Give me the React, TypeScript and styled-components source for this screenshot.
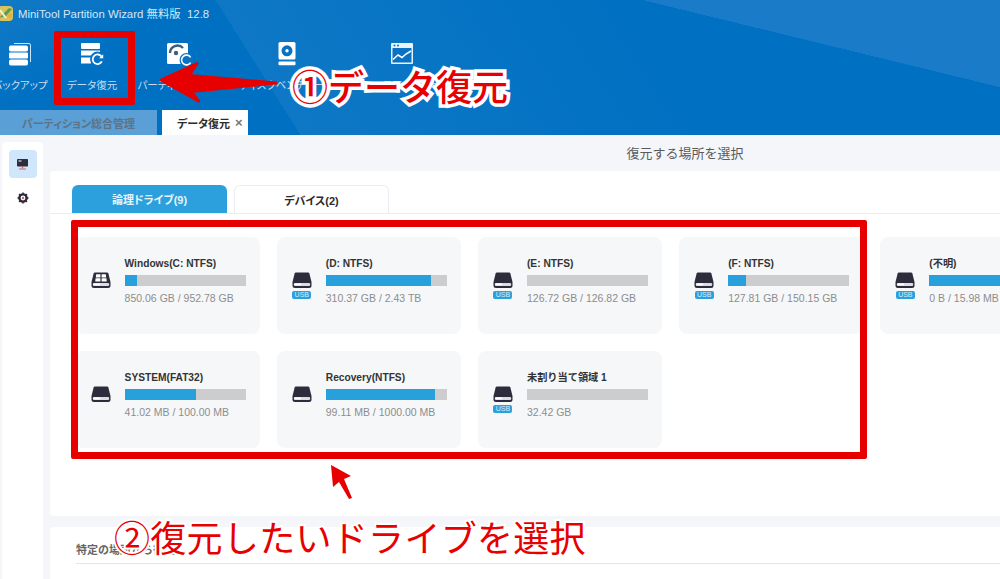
import React from "react";
import styled, { createGlobalStyle } from "styled-components";

const FONT = `"Liberation Sans", "Noto Sans CJK JP", sans-serif`;
const RED = "#e60000";

const GlobalStyle = createGlobalStyle`
  html, body {
    margin: 0;
    padding: 0;
    background: #f4f6fa;
  }
  body {
    font-family: ${FONT};
  }
`;

type Drive = {
  name: string;
  usage: string;
  percent: number;
  usb?: boolean;
  windows?: boolean;
};

const DRIVES: Drive[] = [
  { name: "Windows(C: NTFS)", usage: "850.06 GB / 952.78 GB", percent: 10, windows: true },
  { name: "(D: NTFS)", usage: "310.37 GB / 2.43 TB", percent: 87, usb: true },
  { name: "(E: NTFS)", usage: "126.72 GB / 126.82 GB", percent: 0, usb: true },
  { name: "(F: NTFS)", usage: "127.81 GB / 150.15 GB", percent: 15, usb: true },
  { name: "(不明)", usage: "0 B / 15.98 MB", percent: 100, usb: true },
  { name: "SYSTEM(FAT32)", usage: "41.02 MB / 100.00 MB", percent: 58.7 },
  { name: "Recovery(NTFS)", usage: "99.11 MB / 1000.00 MB", percent: 90 },
  { name: "未割り当て領域 1", usage: "32.42 GB", percent: 0, usb: true },
];

const BackupIcon = () => (
  <svg width="26" height="26" viewBox="0 0 26 26" fill="#fff">
    <path d="M7 2.5h15a1.5 1.5 0 0 1 1.5 1.5v17" fill="none" stroke="#fff" strokeWidth="1" opacity="0.8" />
    <rect x="2" y="4.5" width="19" height="6" rx="1.8" />
    <rect x="2" y="11.5" width="19" height="6" rx="0.8" />
    <rect x="2" y="18.5" width="19" height="6" rx="1.8" />
  </svg>
);

const RecoveryIcon = () => (
  <svg width="26" height="26" viewBox="0 0 26 26" fill="#fff">
    <rect x="2" y="2" width="19" height="6" rx="1" />
    <rect x="2" y="9.5" width="19" height="5" />
    <rect x="2" y="16.5" width="10" height="6" />
    <circle cx="18.5" cy="18" r="7.5" fill="#0a72c2" />
    <path d="M22.5 15.6a4.8 4.8 0 1 0 .3 4.8" fill="none" stroke="#fff" strokeWidth="1.8" />
    <path d="M24.2 13.2v4h-4z" />
  </svg>
);

const PartitionIcon = () => (
  <svg width="28" height="26" viewBox="0 0 28 26">
    <rect x="1" y="2" width="21" height="21" rx="1.5" fill="#fff" />
    <path d="M4 12a7.5 7.5 0 0 1 13-5" fill="none" stroke="#3c5f80" strokeWidth="2.4" />
    <circle cx="10" cy="12" r="2.2" fill="#3c5f80" />
    <circle cx="20.5" cy="19" r="7" fill="#0a72c2" />
    <path d="M24.6 16.4a4.9 4.9 0 1 0 0 5.2" fill="none" stroke="#fff" strokeWidth="1.6" />
  </svg>
);

const DiskIcon = () => (
  <svg width="20" height="26" viewBox="0 0 20 26">
    <rect x="1.5" y="1" width="17" height="17.5" rx="1.5" fill="#fff" />
    <circle cx="10" cy="9.8" r="5.5" fill="#0a72c2" />
    <circle cx="10" cy="9.8" r="1.7" fill="#fff" />
    <rect x="1.5" y="20.5" width="17" height="3.8" rx="1" fill="#fff" />
  </svg>
);

const ChartIcon = () => (
  <svg width="26" height="26" viewBox="0 0 26 26">
    <rect x="2" y="2" width="22" height="21" rx="1" fill="#e8f2fa" />
    <rect x="3.5" y="7" width="19" height="14.5" fill="#0a72c2" />
    <circle cx="5.5" cy="4.5" r="1" fill="#0a72c2" />
    <circle cx="9" cy="4.5" r="1" fill="#0a72c2" />
    <path d="M4 18.5l5-4.5 4 2.5 4-3.5 5-3" fill="none" stroke="#fff" strokeWidth="1.5" />
  </svg>
);

const MonitorIcon = () => (
  <svg width="13" height="13" viewBox="0 0 13 13">
    <rect x="1" y="1" width="11" height="7.5" rx="0.8" fill="#2b2d3c" />
    <rect x="2.5" y="2.5" width="3" height="1" fill="#fff" />
    <rect x="5.8" y="8.5" width="1.4" height="2" fill="#e0605a" />
    <rect x="3" y="10.5" width="7" height="1" fill="#e0605a" />
  </svg>
);

const GearIcon = () => (
  <svg width="12" height="12" viewBox="0 0 12 12">
    <circle cx="6" cy="6" r="3.6" fill="none" stroke="#2b2d3c" strokeWidth="2.4" />
    <path
      d="M6 .5v2M6 9.5v2M.5 6h2M9.5 6h2M2.1 2.1l1.4 1.4M8.5 8.5l1.4 1.4M2.1 9.9l1.4-1.4M8.5 3.5l1.4-1.4"
      stroke="#2b2d3c"
      strokeWidth="1.5"
    />
    <circle cx="6" cy="6" r="1.2" fill="#e0605a" />
  </svg>
);

const DriveIcon = ({ windows }: { windows?: boolean }) => (
  <svg width="20" height="16" viewBox="0 0 20 16">
    <path
      d="M4 .5h12a1.5 1.5 0 0 1 1.4 1L19.5 10v3.5a2.5 2.5 0 0 1-2.5 2.5H3a2.5 2.5 0 0 1-2.5-2.5V10L2.6 1.5A1.5 1.5 0 0 1 4 .5z"
      fill="#2b2d3c"
    />
    <rect x="1.8" y="11" width="16.4" height="3" rx="1.2" fill="#dcdce2" />
    <rect x="2.2" y="11.6" width="7" height="1.6" rx="0.8" fill="#fff" />
    {windows && (
      <path d="M5.2 2.2h4.2v3.2H4.8zM10.6 2.2h4.2l.4 3.2h-4.6zM4.6 6.3h4.8v3.2H4.2zM10.6 6.3h4.8l.4 3.2h-5.2z" fill="#fff" />
    )}
  </svg>
);

const LogoIcon = () => (
  <svg width="16" height="18" viewBox="0 0 16 18">
    <rect x="0" y="2" width="15" height="15" rx="4" fill="#d8c35c" />
    <path d="M1 14L11 4l3 1-6 7z" fill="#5f9a52" />
    <path d="M2 6l6 8" stroke="#f4efcf" strokeWidth="2" />
    <circle cx="12" cy="12" r="2.4" fill="#e2b23e" />
  </svg>
);

const TOOLS = [
  { label: "バックアップ", width: 60, icon: <BackupIcon /> },
  { label: "データ復元", width: 84, icon: <RecoveryIcon /> },
  { label: "パーティション復元", width: 92, icon: <PartitionIcon /> },
  { label: "ディスクベンチマーク", width: 122, icon: <DiskIcon /> },
  { label: "スペースアナライザー", width: 108, icon: <ChartIcon /> },
];

export default function App() {
  return (
    <Page>
      <GlobalStyle />
      <Header>
        <TitleBar>
          <LogoIcon />
          <TitleText>MiniTool Partition Wizard 無料版&nbsp; 12.8</TitleText>
        </TitleBar>
        <Toolbar>
          {TOOLS.map((tool) => (
            <ToolButton key={tool.label} $width={tool.width}>
              <ToolIcon>{tool.icon}</ToolIcon>
              <ToolLabel>{tool.label}</ToolLabel>
            </ToolButton>
          ))}
        </Toolbar>
        <TabStrip>
          <WindowTab>パーティション総合管理</WindowTab>
          <WindowTab $active>
            データ復元 <CloseMark>×</CloseMark>
          </WindowTab>
        </TabStrip>
      </Header>

      <Body>
        <Sidebar>
          <SideButton $active>
            <MonitorIcon />
          </SideButton>
          <SideButton>
            <GearIcon />
          </SideButton>
        </Sidebar>
        <Main>
          <Heading>復元する場所を選択</Heading>
          <DrivePanel>
            <DriveTabs>
              <DriveTab $active>論理ドライブ(9)</DriveTab>
              <DriveTab>デバイス(2)</DriveTab>
            </DriveTabs>
            <DriveGrid>
              {DRIVES.map((drive) => (
                <DriveCard key={drive.name}>
                  <DriveIconBox>
                    <DriveIcon windows={drive.windows} />
                    {drive.usb && <UsbBadge>USB</UsbBadge>}
                  </DriveIconBox>
                  <DriveInfo>
                    <DriveName>{drive.name}</DriveName>
                    <UsageBar>
                      <UsageFill style={{ width: `${drive.percent}%` }} />
                    </UsageBar>
                    <UsageText>{drive.usage}</UsageText>
                  </DriveInfo>
                </DriveCard>
              ))}
            </DriveGrid>
          </DrivePanel>
          <LocationPanel>
            <LocationTitle>特定の場所から復元</LocationTitle>
          </LocationPanel>
        </Main>
      </Body>

      <ToolHighlight />
      <DriveHighlight />
      <Arrows width="1000" height="579" viewBox="0 0 1000 579">
        <path
          d="M161 80 L197 63.5 L189 75.5 L276 83 L191 91.5 L198.500 101 Z"
          fill={RED}
          stroke={RED}
          strokeWidth="3"
          strokeLinejoin="round"
        />
        <path d="M331 465 L351 476 L344 479 L352 498 L349 499 L339 482 L333 487 Z" fill={RED} />
      </Arrows>
      <StepOne>①データ復元</StepOne>
      <StepTwo>②復元したいドライブを選択</StepTwo>
    </Page>
  );
}

const Page = styled.div`
  position: relative;
  width: 1000px;
  height: 579px;
  overflow: hidden;
  background: #f4f6fa;
`;

/* two glassy sweeps over the title area: the hard-edged wedge at the right and the fading band */
const Header = styled.header`
  height: 135px;
  display: flex;
  flex-direction: column;
  background:
    linear-gradient(13.7deg, transparent 77%, #1a7bc9 77%),
    linear-gradient(57.8deg, transparent 27.7%, rgba(255, 255, 255, 0.055) 27.7%, transparent 66%),
    linear-gradient(150deg, rgba(255, 255, 255, 0.07) 0, transparent 16%),
    #0070c2;
`;

const TitleBar = styled.div`
  height: 25px;
  display: flex;
  align-items: center;
  gap: 4px;
  margin-left: -2px;
`;

const TitleText = styled.span`
  font-size: 11.4px;
  color: #d6e6f4;
`;

const Toolbar = styled.div`
  display: flex;
  margin-left: -10px;
  padding-top: 15px;
  height: 70px;
  box-sizing: border-box;
`;

const ToolButton = styled.div<{ $width: number }>`
  width: ${(p) => p.$width}px;
  display: flex;
  flex-direction: column;
  align-items: center;
  gap: 10px;
`;

const ToolIcon = styled.div`
  height: 28px;
  display: flex;
  align-items: center;
`;

const ToolLabel = styled.span`
  font-size: 10.5px;
  line-height: 14px;
  font-feature-settings: "palt";
  color: #c8ddf0;
  white-space: nowrap;
`;

const TabStrip = styled.div`
  margin-top: 15px;
  height: 25px;
  display: flex;
  gap: 5px;
`;

const WindowTab = styled.div<{ $active?: boolean }>`
  width: ${(p) => (p.$active ? 86 : 157)}px;
  padding-left: ${(p) => (p.$active ? 15 : 0)}px;
  box-sizing: border-box;
  display: flex;
  align-items: center;
  justify-content: ${(p) => (p.$active ? "flex-start" : "center")};
  gap: 5px;
  font-size: 11px;
  font-weight: 700;
  font-feature-settings: "palt";
  color: ${(p) => (p.$active ? "#2b2b2b" : "#5f7386")};
  background: ${(p) => (p.$active ? "#fff" : "#5a9fd5")};
`;

const CloseMark = styled.span`
  color: #777;
  font-size: 13px;
`;

const Body = styled.div`
  height: 444px;
  display: flex;
  padding-top: 7px;
  box-sizing: border-box;
`;

const Sidebar = styled.aside`
  width: 41px;
  margin-left: 2px;
  flex-shrink: 0;
  background: #fff;
  border-radius: 4px 4px 0 0;
  display: flex;
  flex-direction: column;
  align-items: center;
  gap: 6px;
  padding-top: 8px;
  box-sizing: border-box;
`;

const SideButton = styled.div<{ $active?: boolean }>`
  width: 28px;
  height: 28px;
  border-radius: 4px;
  display: flex;
  align-items: center;
  justify-content: center;
  background: ${(p) => (p.$active ? "#cfe6fb" : "transparent")};
`;

const Main = styled.main`
  flex: 1;
  min-width: 0;
  margin-left: 7px;
  display: flex;
  flex-direction: column;
`;

const Heading = styled.div`
  height: 29px;
  padding: 0 0 8px 320px;
  box-sizing: border-box;
  width: 950px;
  display: flex;
  align-items: center;
  justify-content: center;
  font-size: 13px;
  color: #5a5a5a;
`;

const DrivePanel = styled.section`
  height: 345px;
  background: #fff;
  border-radius: 4px 0 0 4px;
  padding-top: 14px;
  box-sizing: border-box;
  overflow: hidden;
`;

const DriveTabs = styled.div`
  display: flex;
  gap: 7px;
  padding-left: 22px;
  border-bottom: 1px solid #e9ecf1;
  height: 28px;
`;

const DriveTab = styled.div<{ $active?: boolean }>`
  width: 155px;
  height: 28px;
  box-sizing: border-box;
  border-radius: 6px 6px 0 0;
  display: flex;
  align-items: center;
  justify-content: center;
  font-size: 11px;
  font-weight: 700;
  font-feature-settings: "palt";
  color: ${(p) => (p.$active ? "#e6f3fb" : "#2b2b2b")};
  background: ${(p) => (p.$active ? "#2ba0dc" : "#fff")};
  border: ${(p) => (p.$active ? "none" : "1px solid #e9ecf1")};
  border-bottom: none;
`;

const DriveGrid = styled.div`
  display: grid;
  grid-template-columns: repeat(5, 184px);
  grid-auto-rows: 97px;
  gap: 17px 17.2px;
  margin: 23px 0 0 25.6px;
`;

const DriveCard = styled.div`
  background: #f6f7f9;
  border-radius: 8px;
  display: flex;
  padding: 26px 14px 0 14px;
  box-sizing: border-box;
`;

const DriveIconBox = styled.div`
  width: 20px;
  margin-left: 1px;
  margin-top: 9px;
  display: flex;
  flex-direction: column;
  align-items: center;
  gap: 3px;
`;

const UsbBadge = styled.div`
  width: 19px;
  height: 8px;
  line-height: 8px;
  border-radius: 2px;
  background: #2ba0dc;
  color: #d6eefa;
  font-size: 7px;
  text-align: center;
`;

const DriveInfo = styled.div`
  flex: 1;
  min-width: 0;
  margin-left: 14px;
  display: flex;
  flex-direction: column;
`;

const DriveName = styled.div`
  font-size: 10.2px;
  font-weight: 700;
  line-height: 12px;
  color: #333;
  margin-top: -5px;
  height: 12px;
  white-space: nowrap;
`;

const UsageBar = styled.div`
  margin-top: 5px;
  height: 11px;
  background: #cdcdcd;
`;

const UsageFill = styled.div`
  height: 100%;
  background: #27a0dc;
`;

const UsageText = styled.div`
  margin-top: 6px;
  font-size: 10.5px;
  line-height: 13px;
  color: #8d8d8d;
  white-space: nowrap;
`;

const LocationPanel = styled.section`
  margin-top: 11px;
  flex: 1;
  background: #fff;
  border-radius: 4px 0 0 0;
  padding: 16px 0 0 26px;
`;

const LocationTitle = styled.div`
  font-size: 11px;
  font-weight: 700;
  color: #666;
  height: 20px;
  line-height: 14px;
  border-bottom: 1px solid #e4e6ea;
`;

const ToolHighlight = styled.div`
  position: absolute;
  left: 54px;
  top: 31px;
  width: 81px;
  height: 74px;
  box-sizing: border-box;
  border: 7px solid ${RED};
  border-radius: 2px;
`;

const DriveHighlight = styled.div`
  position: absolute;
  left: 71px;
  top: 220px;
  width: 796px;
  height: 239px;
  box-sizing: border-box;
  border: 7px solid ${RED};
  border-radius: 2px;
`;

const Arrows = styled.svg`
  position: absolute;
  left: 0;
  top: 0;
  pointer-events: none;
`;

const StepLabel = styled.div`
  position: absolute;
  font-family: "Noto Sans CJK JP", sans-serif;
  font-size: 36px;
  line-height: 44px;
  color: ${RED};
  white-space: nowrap;
  paint-order: stroke fill;
`;

const StepOne = styled(StepLabel)`
  left: 292px;
  top: 63px;
  font-weight: 500;
  -webkit-text-stroke: 7px #fff;
`;

const StepTwo = styled(StepLabel)`
  left: 114px;
  top: 514px;
  font-weight: 400;
  letter-spacing: 0.3px;
  -webkit-text-stroke: 4px #fff;
`;
